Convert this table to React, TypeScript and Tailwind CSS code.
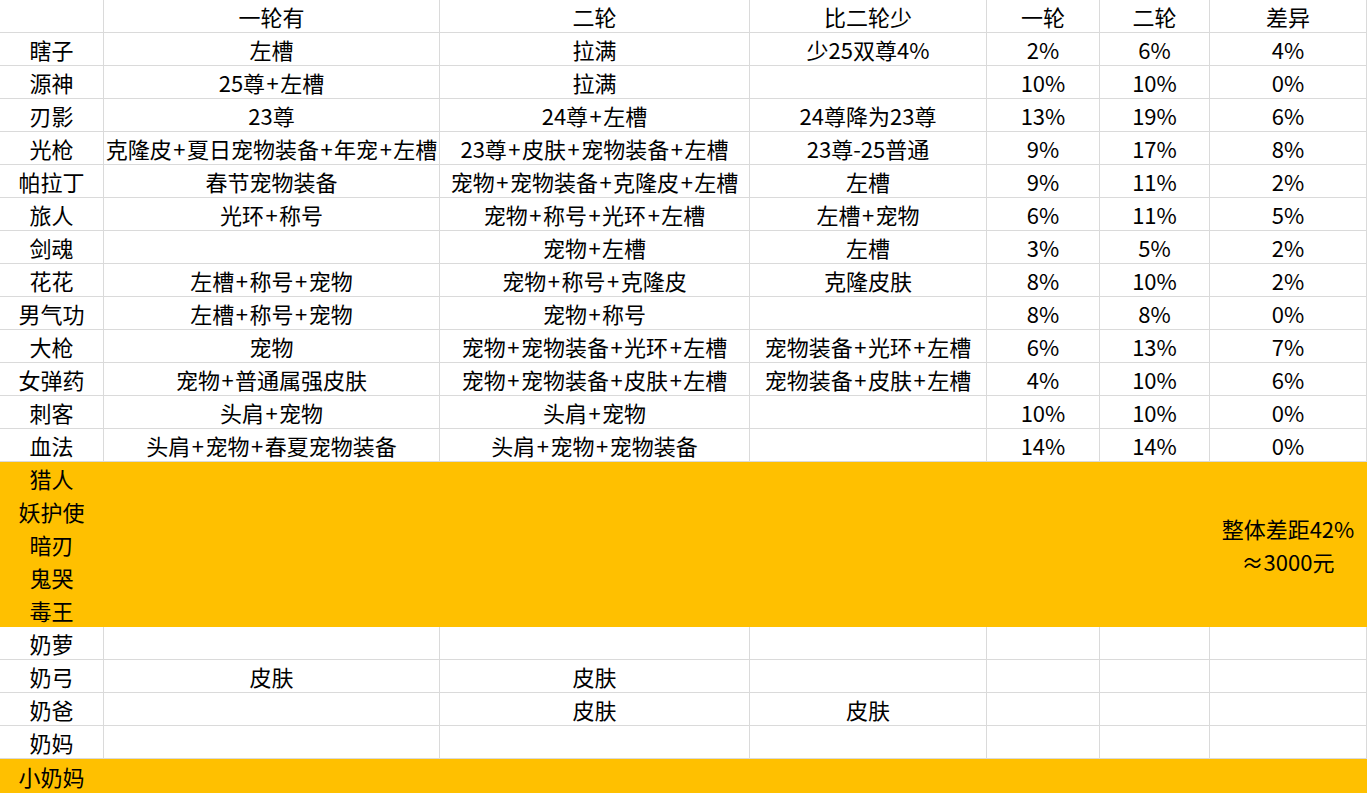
import React from 'react'

type Row = [string, string, string, string, string, string, string]

const head: Row = ['', '一轮有', '二轮', '比二轮少', '一轮', '二轮', '差异']

const rows: Row[] = [
  ['瞎子', '左槽', '拉满', '少25双尊4%', '2%', '6%', '4%'],
  ['源神', '25尊+左槽', '拉满', '', '10%', '10%', '0%'],
  ['刃影', '23尊', '24尊+左槽', '24尊降为23尊', '13%', '19%', '6%'],
  ['光枪', '克隆皮+夏日宠物装备+年宠+左槽', '23尊+皮肤+宠物装备+左槽', '23尊-25普通', '9%', '17%', '8%'],
  ['帕拉丁', '春节宠物装备', '宠物+宠物装备+克隆皮+左槽', '左槽', '9%', '11%', '2%'],
  ['旅人', '光环+称号', '宠物+称号+光环+左槽', '左槽+宠物', '6%', '11%', '5%'],
  ['剑魂', '', '宠物+左槽', '左槽', '3%', '5%', '2%'],
  ['花花', '左槽+称号+宠物', '宠物+称号+克隆皮', '克隆皮肤', '8%', '10%', '2%'],
  ['男气功', '左槽+称号+宠物', '宠物+称号', '', '8%', '8%', '0%'],
  ['大枪', '宠物', '宠物+宠物装备+光环+左槽', '宠物装备+光环+左槽', '6%', '13%', '7%'],
  ['女弹药', '宠物+普通属强皮肤', '宠物+宠物装备+皮肤+左槽', '宠物装备+皮肤+左槽', '4%', '10%', '6%'],
  ['刺客', '头肩+宠物', '头肩+宠物', '', '10%', '10%', '0%'],
  ['血法', '头肩+宠物+春夏宠物装备', '头肩+宠物+宠物装备', '', '14%', '14%', '0%'],
]

const yellowNames = ['猎人', '妖护使', '暗刃', '鬼哭', '毒王']

const lowerRows: Row[] = [
  ['奶萝', '', '', '', '', '', ''],
  ['奶弓', '皮肤', '皮肤', '', '', '', ''],
  ['奶爸', '', '皮肤', '皮肤', '', '', ''],
  ['奶妈', '', '', '', '', '', ''],
]

const cell = 'flex items-center justify-center whitespace-nowrap overflow-hidden pt-[1px]'
const line = 'border-r border-b border-[#dadada]'
const gold = 'bg-[#ffc000] border-r border-b border-[#ffc000]'

// the sheet font draws '+' a bit wider than Noto does
function Text({ t }: { t: string }) {
  const parts = t.split('+')
  return (
    <>
      {parts.map((p, i) => (
        <React.Fragment key={i}>
          {i > 0 && <span className="px-[1.5px]">+</span>}
          {p}
        </React.Fragment>
      ))}
    </>
  )
}

function Cells({ row }: { row: Row }) {
  return (
    <>
      {row.map((t, i) => (
        <div key={i} className={`${cell} ${line}`}>
          <Text t={t} />
        </div>
      ))}
    </>
  )
}

export default function App() {
  return (
    <div
      className="w-[1367px] h-[793px] overflow-hidden bg-white text-[22px] text-black"
      style={{ fontFamily: '"Noto Sans CJK SC", "Noto Sans", sans-serif' }}
    >
      <div className="grid grid-cols-[104px_336px_310px_237px_113px_110px_157px] grid-rows-[repeat(23,33px)_34px]">
        <Cells row={head} />
        {rows.map((r, i) => (
          <Cells key={i} row={r} />
        ))}

        {/* merged gold block */}
        {yellowNames.map((n, i) => (
          <React.Fragment key={n}>
            <div className={`${cell} ${gold}`}>{n}</div>
            {i === 0 && (
              <>
                <div className={`col-span-5 row-span-5 ${gold}`}></div>
                <div className={`row-span-5 ${gold} flex flex-col items-center justify-center leading-[33px] pt-[1px]`}>
                  <span>整体差距42%</span>
                  <span>≈3000元</span>
                </div>
              </>
            )}
          </React.Fragment>
        ))}

        {lowerRows.map((r, i) => (
          <Cells key={i} row={r} />
        ))}

        <div className={`${cell} ${gold}`}>小奶妈</div>
        <div className={`col-span-6 ${gold}`}></div>
      </div>
    </div>
  )
}
